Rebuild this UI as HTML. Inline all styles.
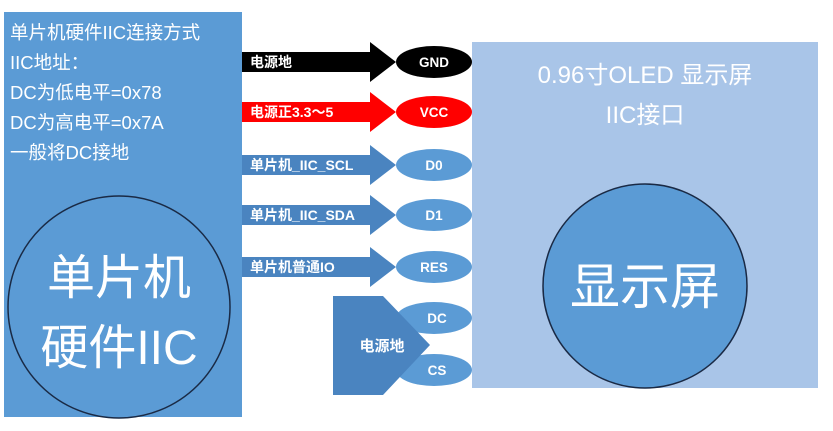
<!DOCTYPE html>
<html><head><meta charset="utf-8"><style>
html,body{margin:0;padding:0;background:#fff;width:833px;height:431px;overflow:hidden}
svg text{font-family:"Liberation Sans","Noto Sans CJK SC",sans-serif;fill:#fff}
</style></head><body>
<svg width="833" height="431" viewBox="0 0 833 431" xmlns="http://www.w3.org/2000/svg">
<rect x="4" y="12" width="238" height="405" fill="#5b9bd5"/>
<g font-size="18.5">
<text x="10" y="39">单片机硬件IIC连接方式</text>
<text x="10" y="69">IIC地址：</text>
<text x="10" y="99">DC为低电平=0x78</text>
<text x="10" y="129">DC为高电平=0x7A</text>
<text x="10" y="159">一般将DC接地</text>
</g>
<circle cx="119" cy="307" r="111" fill="#5b9bd5" stroke="#1a2a45" stroke-width="1.5"/>
<text x="119" y="294" font-size="48" text-anchor="middle">单片机</text>
<text x="119" y="364" font-size="48" text-anchor="middle">硬件IIC</text>

<rect x="472" y="42" width="346" height="346" fill="#a9c5e8"/>
<text x="645" y="83" font-size="24" text-anchor="middle">0.96寸OLED 显示屏</text>
<text x="645" y="123" font-size="24" text-anchor="middle">IIC接口</text>
<circle cx="645" cy="286" r="102" fill="#5b9bd5" stroke="#1a2a45" stroke-width="1.5"/>
<text x="645" y="304" font-size="50" text-anchor="middle">显示屏</text>

<g>
<path d="M242 52H370V42L396 62L370 82V72H242Z" fill="#000"/>
<path d="M242 102H370V92L396 112L370 132V122H242Z" fill="#f00"/>
<path d="M242 155H370V145L396 165L370 185V175H242Z" fill="#4a84c0"/>
<path d="M242 205H370V195L396 215L370 235V225H242Z" fill="#4a84c0"/>
<path d="M242 257H370V247L396 267L370 287V277H242Z" fill="#4a84c0"/>
</g>
<g font-size="14" font-weight="bold">
<text x="250" y="67">电源地</text>
<text x="250" y="117">电源正3.3～5</text>
<text x="250" y="170">单片机_IIC_SCL</text>
<text x="250" y="220">单片机_IIC_SDA</text>
<text x="250" y="272">单片机普通IO</text>
</g>
<ellipse cx="434" cy="62" rx="38" ry="16" fill="#000"/>
<ellipse cx="434" cy="112" rx="38" ry="16" fill="#f00"/>
<ellipse cx="434" cy="165" rx="38" ry="16" fill="#5b9bd5"/>
<ellipse cx="434" cy="215" rx="38" ry="16" fill="#5b9bd5"/>
<ellipse cx="434" cy="267" rx="38" ry="16" fill="#5b9bd5"/>
<ellipse cx="434" cy="318" rx="38" ry="16" fill="#5b9bd5"/>
<ellipse cx="434" cy="370" rx="38" ry="16" fill="#5b9bd5"/>
<path d="M333 296H383L430 345L383 395H333Z" fill="#4a84c0"/>
<text x="382" y="351" font-size="15" font-weight="bold" text-anchor="middle">电源地</text>
<g font-size="13.5" font-weight="bold" text-anchor="middle">
<text x="434" y="67">GND</text>
<text x="434" y="117">VCC</text>
<text x="434" y="170">D0</text>
<text x="434" y="220">D1</text>
<text x="434" y="272">RES</text>
<text x="437" y="323">DC</text>
<text x="437" y="375">CS</text>
</g>
</svg>
</body></html>
